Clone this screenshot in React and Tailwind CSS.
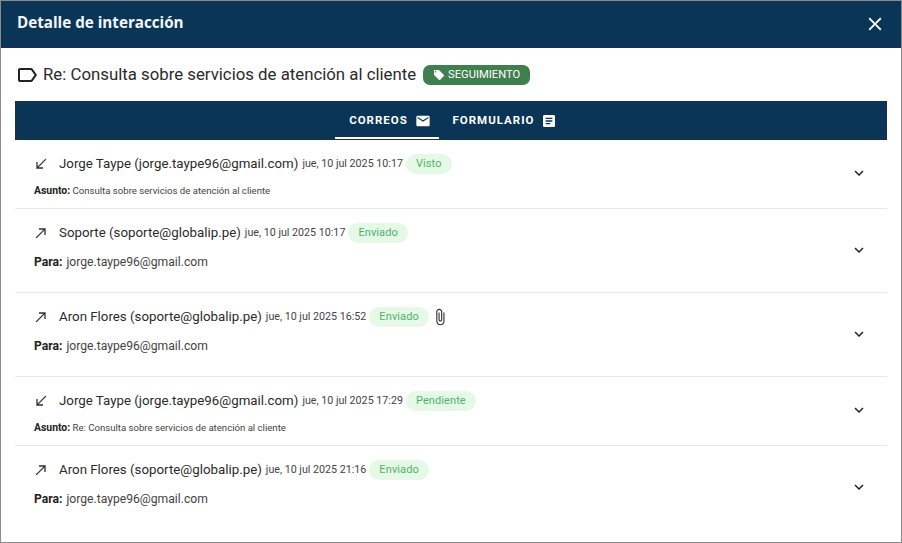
import React from 'react'

const paths = {
    label: 'M17.63 5.84C17.27 5.33 16.67 5 16 5L5 5.01C3.9 5.01 3 5.9 3 7v10c0 1.1.9 1.99 2 1.99L16 19c.67 0 1.27-.33 1.63-.84L22 12l-4.37-6.16zM16 17H5V7h11l3.55 5L16 17z',
    offer: 'M21.41 11.58l-9-9C12.05 2.22 11.55 2 11 2H4c-1.1 0-2 .9-2 2v7c0 .55.22 1.05.59 1.42l9 9c.36.36.86.58 1.41.58.55 0 1.05-.22 1.41-.59l7-7c.37-.36.59-.86.59-1.41 0-.55-.23-1.06-.59-1.42zM5.5 7C4.67 7 4 6.33 4 5.5S4.67 4 5.5 4 7 4.67 7 5.5 6.33 7 5.5 7z',
    email: 'M20 4H4c-1.1 0-1.99.9-1.99 2L2 18c0 1.1.9 2 2 2h16c1.1 0 2-.9 2-2V6c0-1.1-.9-2-2-2zm0 4l-8 5-8-5V6l8 5 8-5v2z',
    article: 'M19 3H5c-1.1 0-2 .9-2 2v14c0 1.1.9 2 2 2h14c1.1 0 2-.9 2-2V5c0-1.1-.9-2-2-2zm-5 14H7v-2h7v2zm3-4H7v-2h10v2zm0-4H7V7h10v2z',
    received: 'M20 5.41L18.59 4 7 15.59V9H5v10h10v-2H8.41z',
    made: 'M9 5v2h6.59L4 18.59 5.41 20 17 8.41V15h2V5z',
    attach: 'M16.5 6v11.5c0 2.21-1.79 4-4 4s-4-1.79-4-4V5c0-1.38 1.12-2.5 2.5-2.5s2.5 1.12 2.5 2.5v10.5c0 .55-.45 1-1 1s-1-.45-1-1V6H10v9.5c0 1.38 1.12 2.5 2.5 2.5s2.5-1.12 2.5-2.5V5c0-2.21-1.79-4-4-4S7 2.79 7 5v12.5c0 3.04 2.46 5.5 5.5 5.5s5.5-2.46 5.5-5.5V6h-1.5z',
    expand: 'M16.59 8.59L12 13.17 7.41 8.59 6 10l6 6 6-6z',
    close: 'M19 6.41L17.59 5 12 10.59 6.41 5 5 6.41 10.59 12 5 17.59 6.41 19 12 13.41 17.59 19 19 17.59 13.41 12z',
}

const Icon = ({ name, className }) => (
    <svg viewBox="0 0 24 24" fill="currentColor" className={className}>
        <path d={paths[name]} />
    </svg>
)

const mails = [
    { dir: 'received', from: 'Jorge Taype (jorge.taype96@gmail.com)', date: 'jue, 10 jul 2025 10:17', status: 'Visto', subject: 'Consulta sobre servicios de atención al cliente' },
    { dir: 'made', from: 'Soporte (soporte@globalip.pe)', date: 'jue, 10 jul 2025 10:17', status: 'Enviado' },
    { dir: 'made', from: 'Aron Flores (soporte@globalip.pe)', date: 'jue, 10 jul 2025 16:52', status: 'Enviado', attach: true },
    { dir: 'received', from: 'Jorge Taype (jorge.taype96@gmail.com)', date: 'jue, 10 jul 2025 17:29', status: 'Pendiente', subject: 'Re: Consulta sobre servicios de atención al cliente' },
    { dir: 'made', from: 'Aron Flores (soporte@globalip.pe)', date: 'jue, 10 jul 2025 21:16', status: 'Enviado', last: true },
]

const MailRow = ({ mail }) => (
    <div className={`flex items-center pl-[18px] pr-[19px] ${mail.subject ? 'h-[69px]' : 'h-[84px]'} ${mail.last ? '' : 'border-b border-[#e8e8e8]'}`}>
        <div className="flex-1 self-start pt-[13px]">
            <div className="flex items-center h-[22px]">
                <Icon name={mail.dir} className="w-[16px] h-[16px] text-[#333] mr-[10px]" />
                <span className="text-[13.3px] text-[#2b2b2b]">{mail.from}</span>
                <span className="text-[10.7px] text-[#444] ml-[4px]">{mail.date}</span>
                <span className="ml-[3px] px-[10px] h-[20px] flex items-center rounded-[10px] bg-[#e6f8e6] text-[11px] text-[#4fb36a] tracking-[0.1px]">{mail.status}</span>
                {mail.attach && <Icon name="attach" className="w-[18px] h-[18px] text-[#333] ml-[2px]" />}
            </div>
            {mail.subject ? (
                <p className="text-[9.6px] text-[#444] mt-[9px] ml-[1px] leading-[14px]"><b className="text-[10.4px] text-[#222]">Asunto:</b> {mail.subject}</p>
            ) : (
                <p className="text-[12.15px] text-[#444] mt-[9px] ml-[1px] leading-[18px]"><b className="text-[#222] mr-[1px]">Para:</b> jorge.taype96@gmail.com</p>
            )}
        </div>
        <Icon name="expand" className="w-[18px] h-[18px] text-[#222] mb-[2px]" />
    </div>
)

const App = () => {
    return (
        <div className="w-[902px] h-[543px] bg-white border border-[#8c8c8c] overflow-hidden font-['Roboto',sans-serif]">
            <header className="h-[47px] bg-[#0a3556] border-b border-[#1d2b55] flex items-center justify-between pl-[16px] pr-[15px]">
                <h1 className="text-[15.2px] font-bold text-[#f2f6fa] font-['Open_Sans',sans-serif] mt-[-3px]">Detalle de interacción</h1>
                <Icon name="close" className="w-[22px] h-[22px] text-white" />
            </header>
            <div className="h-[53px] flex items-center pl-[14px]">
                <Icon name="label" className="w-[24px] h-[24px] text-[#222] mr-[4px]" />
                <span className="text-[16.8px] text-[#2b2b2b]">Re: Consulta sobre servicios de atención al cliente</span>
                <span className="ml-[7px] h-[20px] w-[107px] pt-[1px] justify-center rounded-[7px] bg-[#3f7f4f] text-white text-[11.2px] flex items-center gap-[3px]">
                    <Icon name="offer" className="w-[12px] h-[12px]" />
                    SEGUIMIENTO
                </span>
            </div>
            <div className="mx-[14px] w-[872px]">
                <nav className="h-[39px] bg-[#0a3556] border border-[#222d3f] flex justify-center">
                    <div className="flex h-full pr-[10px]">
                        <div className="w-[104px] pt-[2px] pl-[7px] flex items-center justify-center gap-[7px] text-white text-[11.5px] font-bold tracking-[1px] border-b-2 border-white">
                            CORREOS
                            <Icon name="email" className="w-[16px] h-[16px]" />
                        </div>
                        <div className="ml-[14px] flex items-center gap-[7px] text-white text-[11.5px] font-bold tracking-[1px]">
                            FORMULARIO
                            <Icon name="article" className="w-[16px] h-[16px]" />
                        </div>
                    </div>
                </nav>
                {mails.map((mail, i) => <MailRow key={i} mail={mail} />)}
            </div>
        </div>
    )
}

export default App
